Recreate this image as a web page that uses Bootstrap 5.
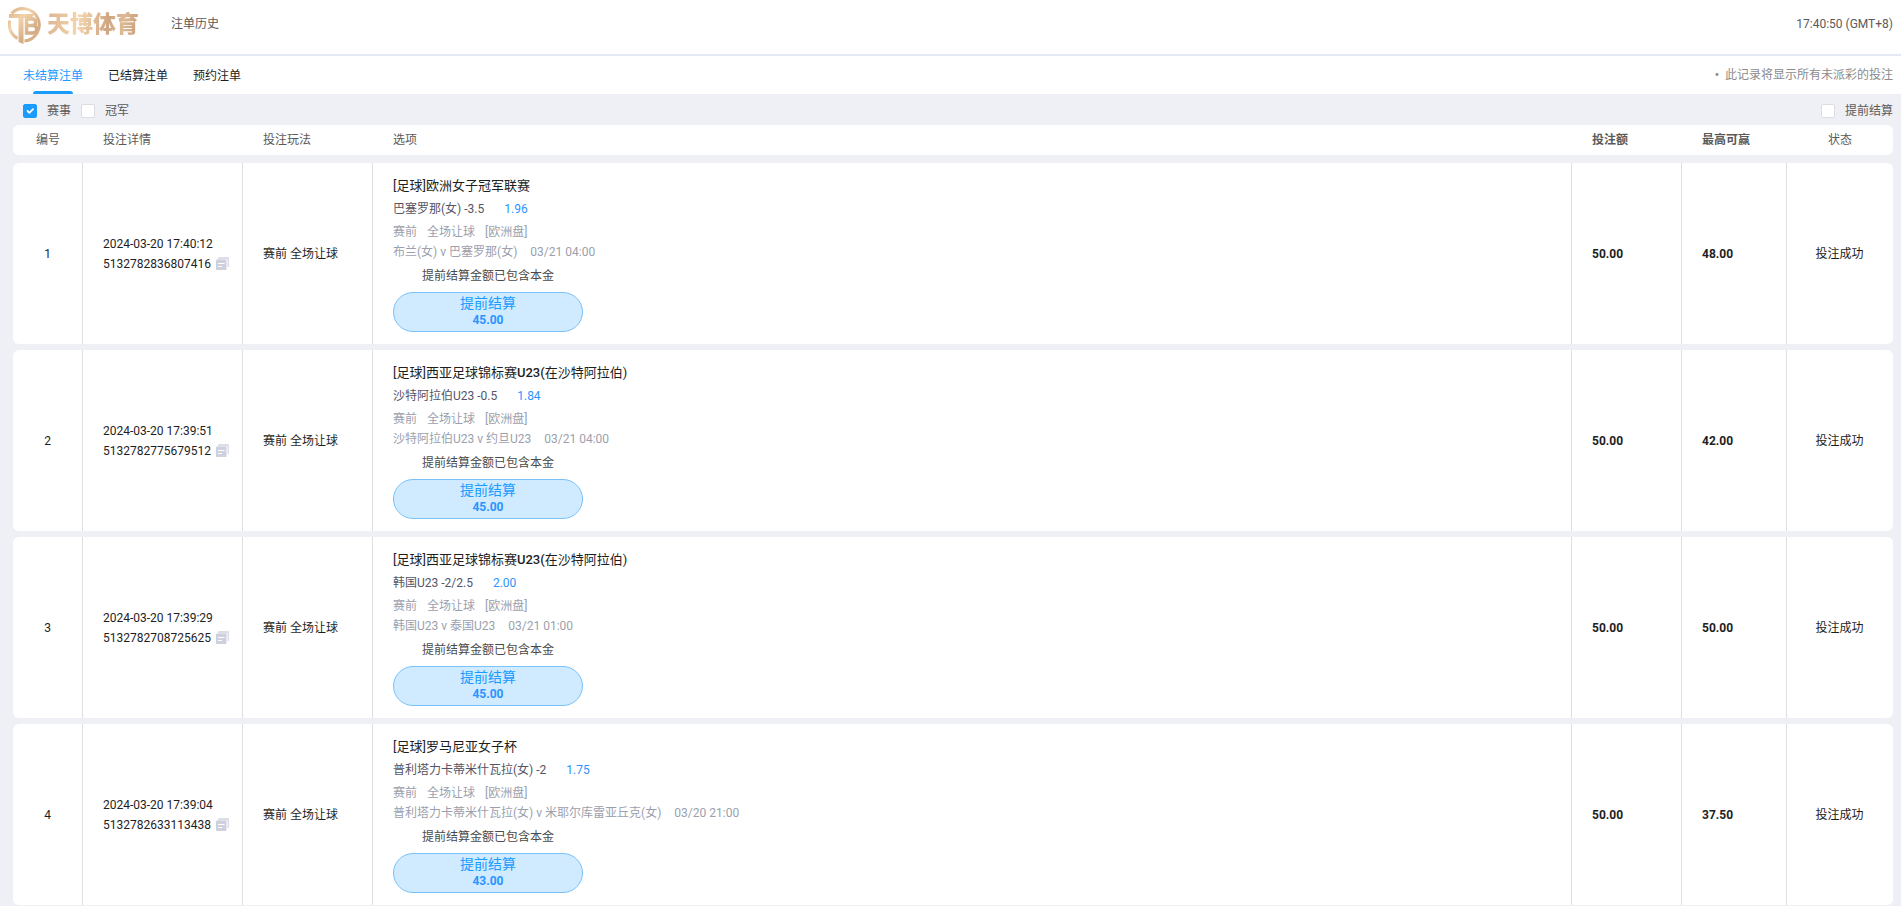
<!DOCTYPE html>
<html lang="zh-CN">
<head>
<meta charset="utf-8">
<meta name="viewport" content="width=device-width, initial-scale=1">
<title>注单历史</title>
<link href="https://cdn.jsdelivr.net/npm/bootstrap@5.3.0/dist/css/bootstrap.min.css" rel="stylesheet">
<style>
body{font:12px/20px Roboto,"Noto Sans CJK SC",sans-serif;color:#1e1e1e;background:#eff0f6;min-height:100vh}
a{text-decoration:none}
.topbar{height:56px;border-bottom:2px solid #e4e9f5;padding:0 8px 6px;color:#5a5a5a}
.topbar .page-name{margin-left:32px;color:#5a5a5a}
.brand{gap:2px}
.brand-text{font:900 23px/30px "Noto Sans CJK SC",sans-serif;padding-bottom:4px;background:linear-gradient(100deg,#d9b48c,#f4d5ae 35%,#cfa681 65%,#dcb994 80%,#c89d79);-webkit-background-clip:text;background-clip:text;color:transparent}
.tabs{height:38px;padding:0 8px 0 23px}
.tabs nav{gap:25px}
.tabs nav a{color:#1e1e1e;line-height:36px;padding-top:2px;position:relative}
.tabs nav a.active{color:#1a9cff}
.tabs nav a.active::after{content:"";position:absolute;left:10px;right:10px;bottom:0;height:3px;border-radius:3px 3px 0 0;background:#1a9cff}
.hint{color:#8b8b8b}
.hint b{margin-right:6px}
.filters{height:31px;gap:10px;padding:2px 8px 0 23px;color:#5a5a5a}
.filters .form-check-input{width:14px;height:14px;margin:0 10px 0 0;border:1px solid #dcdde3;border-radius:2px;box-shadow:none}
.filters .form-check-input:checked{background-color:#1a9cff;border-color:#1a9cff;background-size:12px}
.bets{padding:0 8px 0 13px}
.bets tr{display:grid;grid-template-columns:69px 160px 130px 1fr 110px 105px 107px;background:#fff;border-radius:6px}
.bets thead{display:block;margin-bottom:8px}
.bets tbody{display:grid;gap:6px}
.bets th{font-weight:400;color:#5a5a5a;line-height:30px;padding:0 0 0 21px}
.bets th.strong{font-weight:700;color:#5a5a5a}
.bets td{display:flex;flex-direction:column;justify-content:center;border-left:1px solid #dfdfe1;padding-left:20px}
.bets td:first-child{border-left-color:transparent}
.bets tr>:first-child,.bets tr>:last-child{padding-left:0;text-align:center}
.bets tr>th:first-child,.bets tr>th:last-child{padding-left:1px}
.bets td.money{font-weight:700}
.bets td.pick{padding:12px 20px;align-items:flex-start;color:#9b9fae}
.league{font-size:13px;line-height:22px;font-weight:500;color:#1e1e1e}
.league span{font-weight:400}
.choice{line-height:24px;color:#555566}
.odds{color:#2d93ff;margin-left:20px}
.kind{gap:10px;padding-top:1px}
.kick{margin-left:13px}
.note{width:190px;line-height:28px;text-align:center;color:#4a4a4a;margin-bottom:2px}
.cashout{width:190px;height:40px;border:1px solid #78c3fb;border-radius:20px;background:#d0eaff;color:#1a9cff;padding:0;display:flex;flex-direction:column;align-items:center;font-size:14px;line-height:20px}
.cashout b{font-size:12px;line-height:14px;font-weight:700;color:#2d93ff}
.copy{border:0;background:none;padding:0;margin-left:5px;line-height:0}
</style>
</head>
<body>
<svg width="0" height="0" class="position-absolute" aria-hidden="true">
<symbol id="copy" viewBox="0 0 13 13"><path d="M3 0H12a1 1 0 0 1 1 1V10H11.500V2.500H2V1a1 1 0 0 1 1-1z" fill="#dcdde7"/><rect y="2.500" width="10.500" height="10.500" rx="1" fill="#cfd0dd"/><path d="M2 6.500H8.500M2 9.500H6" stroke="#fff" stroke-width="1.200"/></symbol>
</svg>
<header class="topbar bg-white d-flex align-items-center">
<a href="#" class="brand d-flex align-items-center">
<svg width="37" height="40" viewBox="0 0 37 40" role="img" aria-label="TB"><defs><linearGradient id="gold" gradientUnits="userSpaceOnUse" x1="0" y1="2" x2="36" y2="38"><stop offset="0" stop-color="#d6ae86"/><stop offset=".35" stop-color="#f3d2a9"/><stop offset=".7" stop-color="#d2aa83"/><stop offset="1" stop-color="#e6c49c"/></linearGradient></defs>
<g fill="none" stroke="url(#gold)" stroke-width="3"><path d="M3.500 9.500A16.200 16.200 0 1 1 16.500 37M9.500 34.500A16.200 16.200 0 0 1 1.800 16.500"/><path d="M17 15H25a3.300 3.300 0 0 1 0 6.500H20M25 21.500a3.500 3.500 0 0 1 0 7.500H18.500V15" stroke-width="3.500"/></g>
<path d="M1 10H26L24 14H15.500V40L10.500 38V14H1Z" fill="url(#gold)"/></svg>
<span class="brand-text">天博体育</span></a>
<span class="page-name">注单历史</span>
<time class="ms-auto">17:40:50 (GMT+8)</time>
</header>
<div class="tabs bg-white d-flex justify-content-between align-items-center">
<nav class="d-flex"><a href="#" class="active" aria-current="page">未结算注单</a><a href="#">已结算注单</a><a href="#">预约注单</a></nav>
<span class="hint"><b>•</b>此记录将显示所有未派彩的投注</span>
</div>
<form class="filters d-flex align-items-center">
<label class="d-flex align-items-center"><input class="form-check-input" type="checkbox" checked>赛事</label>
<label class="d-flex align-items-center me-auto"><input class="form-check-input" type="checkbox">冠军</label>
<label class="d-flex align-items-center"><input class="form-check-input" type="checkbox">提前结算</label>
</form>
<main class="bets">
<table class="d-block">
<thead><tr><th>编号</th><th>投注详情</th><th>投注玩法</th><th>选项</th><th class="strong">投注额</th><th class="strong">最高可赢</th><th>状态</th></tr></thead>
<tbody>
<tr><td>1</td>
<td><span>2024-03-20 17:40:12</span><span class="d-flex align-items-center">5132782836807416<button class="copy" type="button" aria-label="复制"><svg width="13" height="13"><use href="#copy"/></svg></button></span></td>
<td>赛前 全场让球</td>
<td class="pick"><div class="league"><span>[足球]欧洲女子冠军联赛</span></div><div class="choice">巴塞罗那(女) -3.5<span class="odds">1.96</span></div><div class="kind d-flex"><span>赛前</span><span>全场让球</span><span>[欧洲盘]</span></div><div>布兰(女) v 巴塞罗那(女)<span class="kick">03/21 04:00</span></div><div class="note">提前结算金额已包含本金</div><button class="cashout" type="button">提前结算<b>45.00</b></button></td>
<td class="money">50.00</td><td class="money">48.00</td><td>投注成功</td></tr>
<tr><td>2</td>
<td><span>2024-03-20 17:39:51</span><span class="d-flex align-items-center">5132782775679512<button class="copy" type="button" aria-label="复制"><svg width="13" height="13"><use href="#copy"/></svg></button></span></td>
<td>赛前 全场让球</td>
<td class="pick"><div class="league"><span>[足球]西亚足球锦标赛</span>U23(<span>在沙特阿拉伯)</span></div><div class="choice">沙特阿拉伯U23 -0.5<span class="odds">1.84</span></div><div class="kind d-flex"><span>赛前</span><span>全场让球</span><span>[欧洲盘]</span></div><div>沙特阿拉伯U23 v 约旦U23<span class="kick">03/21 04:00</span></div><div class="note">提前结算金额已包含本金</div><button class="cashout" type="button">提前结算<b>45.00</b></button></td>
<td class="money">50.00</td><td class="money">42.00</td><td>投注成功</td></tr>
<tr><td>3</td>
<td><span>2024-03-20 17:39:29</span><span class="d-flex align-items-center">5132782708725625<button class="copy" type="button" aria-label="复制"><svg width="13" height="13"><use href="#copy"/></svg></button></span></td>
<td>赛前 全场让球</td>
<td class="pick"><div class="league"><span>[足球]西亚足球锦标赛</span>U23(<span>在沙特阿拉伯)</span></div><div class="choice">韩国U23 -2/2.5<span class="odds">2.00</span></div><div class="kind d-flex"><span>赛前</span><span>全场让球</span><span>[欧洲盘]</span></div><div>韩国U23 v 泰国U23<span class="kick">03/21 01:00</span></div><div class="note">提前结算金额已包含本金</div><button class="cashout" type="button">提前结算<b>45.00</b></button></td>
<td class="money">50.00</td><td class="money">50.00</td><td>投注成功</td></tr>
<tr><td>4</td>
<td><span>2024-03-20 17:39:04</span><span class="d-flex align-items-center">5132782633113438<button class="copy" type="button" aria-label="复制"><svg width="13" height="13"><use href="#copy"/></svg></button></span></td>
<td>赛前 全场让球</td>
<td class="pick"><div class="league"><span>[足球]罗马尼亚女子杯</span></div><div class="choice">普利塔力卡蒂米什瓦拉(女) -2<span class="odds">1.75</span></div><div class="kind d-flex"><span>赛前</span><span>全场让球</span><span>[欧洲盘]</span></div><div>普利塔力卡蒂米什瓦拉(女) v 米耶尔库雷亚丘克(女)<span class="kick">03/20 21:00</span></div><div class="note">提前结算金额已包含本金</div><button class="cashout" type="button">提前结算<b>43.00</b></button></td>
<td class="money">50.00</td><td class="money">37.50</td><td>投注成功</td></tr>
</tbody>
</table>
</main>
<script src="https://cdn.jsdelivr.net/npm/bootstrap@5.3.0/dist/js/bootstrap.bundle.min.js"></script>
</body>
</html>
